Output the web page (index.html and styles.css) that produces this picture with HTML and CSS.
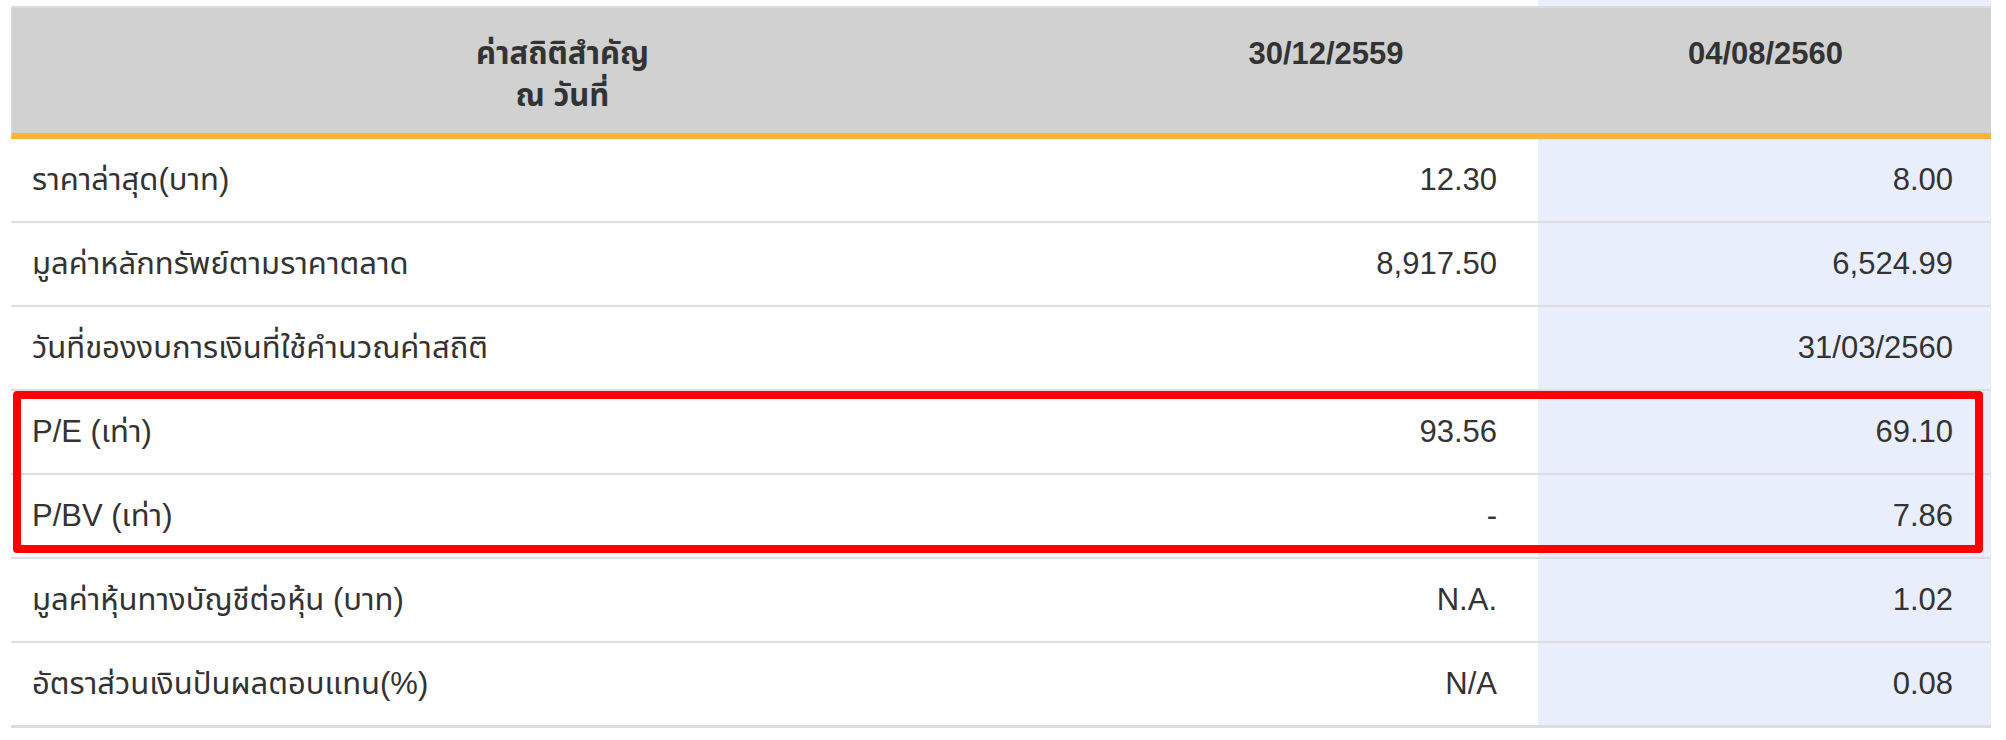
FILE: index.html
```html
<!DOCTYPE html>
<html lang="th">
<head>
<meta charset="utf-8">
<title>ค่าสถิติสำคัญ</title>
<link rel="stylesheet" href="styles.css">
</head>
<body>
<div class="page">
  <div class="stats">
    <div class="row head">
      <div class="cell c1">ค่าสถิติสำคัญ<br>ณ วันที่</div>
      <div class="cell c2">30/12/2559</div>
      <div class="cell c3">04/08/2560</div>
    </div>
    <div class="row">
      <div class="cell c1">ราคาล่าสุด(บาท)</div>
      <div class="cell c2">12.30</div>
      <div class="cell c3">8.00</div>
    </div>
    <div class="row">
      <div class="cell c1">มูลค่าหลักทรัพย์ตามราคาตลาด</div>
      <div class="cell c2">8,917.50</div>
      <div class="cell c3">6,524.99</div>
    </div>
    <div class="row">
      <div class="cell c1">วันที่ของงบการเงินที่ใช้คำนวณค่าสถิติ</div>
      <div class="cell c2"></div>
      <div class="cell c3">31/03/2560</div>
    </div>
    <div class="group marked">
      <div class="row">
        <div class="cell c1">P/E (เท่า)</div>
        <div class="cell c2">93.56</div>
        <div class="cell c3">69.10</div>
      </div>
      <div class="row">
        <div class="cell c1">P/BV (เท่า)</div>
        <div class="cell c2">-</div>
        <div class="cell c3">7.86</div>
      </div>
    </div>
    <div class="row">
      <div class="cell c1">มูลค่าหุ้นทางบัญชีต่อหุ้น (บาท)</div>
      <div class="cell c2">N.A.</div>
      <div class="cell c3">1.02</div>
    </div>
    <div class="row last">
      <div class="cell c1">อัตราส่วนเงินปันผลตอบแทน(%)</div>
      <div class="cell c2">N/A</div>
      <div class="cell c3">0.08</div>
    </div>
  </div>
</div>
</body>
</html>
```

FILE: styles.css
```css
html, body {
  margin: 0;
  padding: 0;
  background: #ffffff;
}

body {
  font-family: "Liberation Sans", "Noto Sans Thai", "Noto Sans Thai UI", "Loma", "Garuda", "Tlwg Typo", sans-serif;
  color: #333333;
  font-size: 31px;
}

.page {
  padding: 6px 15px 0 11px;
  background: linear-gradient(90deg, transparent 1527px, #e8eefb 1527px, #e8eefb 1980px, transparent 1980px) 11px 0 / 100% 6px no-repeat;
}

.stats {
  width: 1980px;
  display: flex;
  flex-direction: column;
}

.row {
  display: grid;
  grid-template-columns: 1101px 426px 453px;
  border-bottom: 2px solid #dddddd;
}

.row.last {
  border-bottom-width: 3px;
}

.cell {
  height: 82px;
  line-height: 82px;
  white-space: nowrap;
}

.c1 {
  padding-left: 21px;
}

.c2 {
  text-align: right;
  padding-right: 41px;
}

.c3 {
  text-align: right;
  padding-right: 38px;
  background: #e8eefb;
}

.row.head {
  border-top: 2px solid #dcdcdc;
  border-left: 1px solid #dcdcdc;
  border-bottom: 6px solid #ffb336;
  background: #d1d1d1;
}

.row.head .cell {
  height: 125px;
  line-height: 42px;
  padding: 25px 0 0 0;
  box-sizing: border-box;
  text-align: center;
  font-weight: bold;
  background: transparent;
}

.group {
  position: relative;
}

.marked::after {
  content: "";
  position: absolute;
  left: 2px;
  right: 8px;
  top: 0;
  bottom: 6px;
  border: 8px solid #ff0000;
  border-radius: 4px;
  pointer-events: none;
}
```
